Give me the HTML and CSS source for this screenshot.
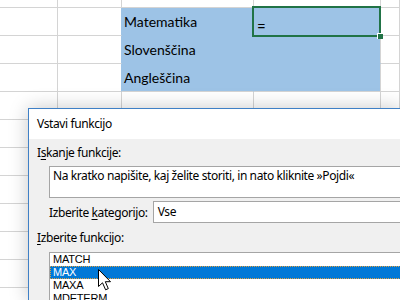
FILE: index.html
```html
<!DOCTYPE html>
<html lang="sl">

<head>
    <meta charset="UTF-8">
    <title>Vstavi funkcijo</title>
    <link rel="stylesheet" href="styles.css">
</head>

<body>
    <div class="sheet">
        <div class="cell"></div><div class="cell"></div><div class="cell"></div><div class="cell"></div><div class="cell"></div>

        <div class="cell"></div><div class="cell sel-left"></div><div class="cell sel">Matematika</div><div class="cell sel sel-right active"><span class="edit">=</span></div><div class="cell"></div>
        <div class="cell"></div><div class="cell sel-left"></div><div class="cell sel">Slovenščina</div><div class="cell sel sel-right"></div><div class="cell"></div>
        <div class="cell"></div><div class="cell sel-left"></div><div class="cell sel sel-bottom">Angleščina</div><div class="cell sel sel-right sel-bottom"></div><div class="cell"></div>

        <div class="cell"></div><div class="cell"></div><div class="cell"></div><div class="cell"></div><div class="cell"></div>
        <div class="cell"></div><div class="cell"></div><div class="cell"></div><div class="cell"></div><div class="cell"></div>
        <div class="cell"></div><div class="cell"></div><div class="cell"></div><div class="cell"></div><div class="cell"></div>
        <div class="cell"></div><div class="cell"></div><div class="cell"></div><div class="cell"></div><div class="cell"></div>
        <div class="cell"></div><div class="cell"></div><div class="cell"></div><div class="cell"></div><div class="cell"></div>
        <div class="cell"></div><div class="cell"></div><div class="cell"></div><div class="cell"></div><div class="cell"></div>
        <div class="cell"></div><div class="cell"></div><div class="cell"></div><div class="cell"></div><div class="cell"></div>
        <div class="cell"></div><div class="cell"></div><div class="cell"></div><div class="cell"></div><div class="cell"></div>
    </div>

    <div class="dialog">
        <div class="dialog-title">Vstavi funkcijo</div>
        <div class="dialog-body">
            <div class="label">I<u>s</u>kanje funkcije:</div>
            <div class="search-box">Na kratko napišite, kaj želite storiti, in nato kliknite »Pojdi«</div>

            <div class="category-row">
                <span class="label">Izberite <u>k</u>ategorijo:</span>
                <div class="select-box">Vse</div>
            </div>

            <div class="label fn-label"><u>I</u>zberite funkcijo:</div>
            <ul class="fn-list">
                <li>MATCH</li>
                <li class="selected">MAX</li>
                <li>MAXA</li>
                <li>MDETERM</li>
            </ul>
        </div>
    </div>

    <svg class="cursor" width="14" height="22" viewBox="0 0 14 22">
        <path d="M0.5 0.5 L0.5 17.5 L4.5 13.8 L7.6 20.8 L10.3 19.6 L7.3 12.7 L12.5 12.7 Z" fill="#fff" stroke="#000" stroke-width="1" />
    </svg>
</body>

</html>
```

FILE: styles.css
```css
html,
body {
    margin: 0;
    padding: 0;
    width: 400px;
    height: 300px;
    overflow: hidden;
    background: #fff;
}

body {
    position: relative;
}

/* spreadsheet behind the dialog */
.sheet {
    display: grid;
    grid-template-columns: 58px 64px 132px 127px 1fr;
    grid-template-rows: 8px repeat(11, 28px);
    font-family: Lato, "Liberation Sans", sans-serif;
    font-size: 14px;
    color: #000;
}

.cell {
    box-sizing: border-box;
    border-right: 1px solid #d4d4d4;
    border-bottom: 1px solid #d4d4d4;
    padding-left: 2px;
    display: flex;
    align-items: center;
    white-space: nowrap;
}

.sel {
    background-color: #9dc3e6;
    border-color: #9dc3e6;
}

.sel-left {
    border-right-color: #9dc3e6;
}

.sel-right {
    border-right-color: #d4d4d4;
}

.sel-bottom {
    border-bottom-color: #d4d4d4;
}

.active {
    position: relative;
}

.active::after {
    content: "";
    position: absolute;
    left: -2px;
    top: -2px;
    right: -1px;
    bottom: -2px;
    border: 2px solid #217346;
}

.active::before {
    content: "";
    position: absolute;
    right: -3px;
    bottom: -4px;
    width: 5px;
    height: 5px;
    background: #217346;
    border-left: 1px solid #fff;
    border-top: 1px solid #fff;
    z-index: 1;
}

.edit {
    padding-top: 8px;
    padding-left: 1px;
    font-size: 15px;
}

/* Insert function dialog */
.dialog {
    position: absolute;
    left: 28px;
    top: 108px;
    width: 372px;
    height: 192px;
    overflow: hidden;
    border-top: 1px solid #3f80c6;
    border-left: 1px solid #3f80c6;
    background: #f0f0f0;
    box-shadow: 0 0 18px rgba(0, 0, 0, 0.22);
    font-family: "Segoe UI", "Noto Sans", sans-serif;
    font-size: 12px;
    letter-spacing: -0.4px;
    color: #000;
}

.dialog-title {
    background: #fff;
    height: 30px;
    line-height: 30px;
    padding-left: 8px;
}

.dialog-body {
    padding: 6px 0 0 8px;
}

.label {
    line-height: 16px;
}

.label u {
    text-underline-offset: 2px;
}

.search-box {
    box-sizing: border-box;
    margin: 5px 0 0 12px;
    height: 32px;
    background: #fff;
    border: 1px solid #a5a5a5;
    border-right: none;
    padding: 1px 0 0 3px;
    line-height: 16px;
    white-space: nowrap;
}

.category-row {
    display: flex;
    align-items: center;
    margin: 3px 0 0 12px;
    gap: 5px;
}

.category-row .label {
    padding-top: 2px;
}

.select-box {
    box-sizing: border-box;
    flex: 1;
    height: 22px;
    line-height: 20px;
    background: #fff;
    border: 1px solid #a5a5a5;
    border-right: none;
    padding-left: 4px;
}

.fn-label {
    margin-top: 7px;
}

.fn-list {
    list-style: none;
    margin: 6px 0 0 12px;
    padding: 0;
    background: #fff;
    border-top: 1px solid #a5a5a5;
    border-left: 1px solid #a5a5a5;
    height: 60px;
    font-family: "Liberation Sans", Arial, sans-serif;
    font-size: 11px;
    letter-spacing: -0.2px;
}

.fn-list li {
    height: 13px;
    line-height: 13px;
    padding-left: 3px;
}

.fn-list .selected {
    box-sizing: border-box;
    background: #0078d7;
    color: #fff;
    outline: 1px dotted #e0a040;
    outline-offset: -1px;
}

.cursor {
    position: absolute;
    left: 98px;
    top: 269px;
}
```
